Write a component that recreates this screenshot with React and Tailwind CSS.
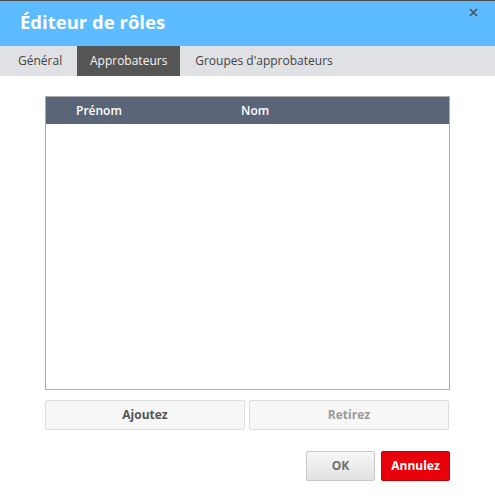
export default function App() {
  return (
    <div className="w-[495px] h-[501px] bg-white flex flex-col" style={{ fontFamily: '"Open Sans", "Noto Sans", sans-serif' }}>
      <div className="h-px bg-[#4a4a4a]" />
      <div className="h-[45px] bg-[#5cbcff] flex items-start justify-between">
        <div className="pl-5 pt-[6px] text-[18.5px] font-bold text-white leading-[30px]">Éditeur de rôles</div>
        <svg width="9" height="9" viewBox="0 0 9 9" className="mt-[7px] mr-[17px]">
          <path d="M1 1L8 8M8 1L1 8" stroke="#4a4f5a" strokeWidth="1.6" />
        </svg>
      </div>
      <div className="h-[30px] bg-[#e0e1e4] flex text-[12px] text-[#444]">
        <div className="pl-[18px] pr-[15px] flex items-center">Général</div>
        <div className="w-[103px] bg-[#555555] text-[#f5f5f5] flex items-center justify-center">Approbateurs</div>
        <div className="px-[15px] flex items-center">Groupes d'approbateurs</div>
      </div>
      <div className="px-[45px] pt-[20px] flex flex-col">
        <div className="h-[294px] border border-[#a9abae] flex flex-col">
          <div className="h-[27px] bg-[#5a6577] flex items-center text-[12px] font-semibold text-white">
            <div className="pl-[30px] w-[195px]">Prénom</div>
            <div>Nom</div>
          </div>
        </div>
        <div className="mt-[10px] flex gap-[4px]">
          <button className="w-[200px] h-[30px] bg-[#f7f7f7] border border-[#dcdcdc] rounded-[2px] text-[12px] font-bold text-[#555]">Ajoutez</button>
          <button className="w-[200px] h-[30px] bg-[#f7f7f7] border border-[#dcdcdc] rounded-[2px] text-[12px] font-bold text-[#9a9a9a]">Retirez</button>
        </div>
        <div className="mt-[21px] flex justify-end gap-[6px]">
          <button className="w-[69px] h-[30px] bg-gradient-to-b from-[#f7f7f7] to-[#e2e2e2] border border-[#c9c9c9] rounded-[2px] text-[12px] font-bold text-[#707070]">OK</button>
          <button className="w-[69px] h-[30px] bg-[#e8000b] border border-[#c10008] rounded-[2px] text-[12px] font-bold text-white">Annulez</button>
        </div>
      </div>
    </div>
  );
}
